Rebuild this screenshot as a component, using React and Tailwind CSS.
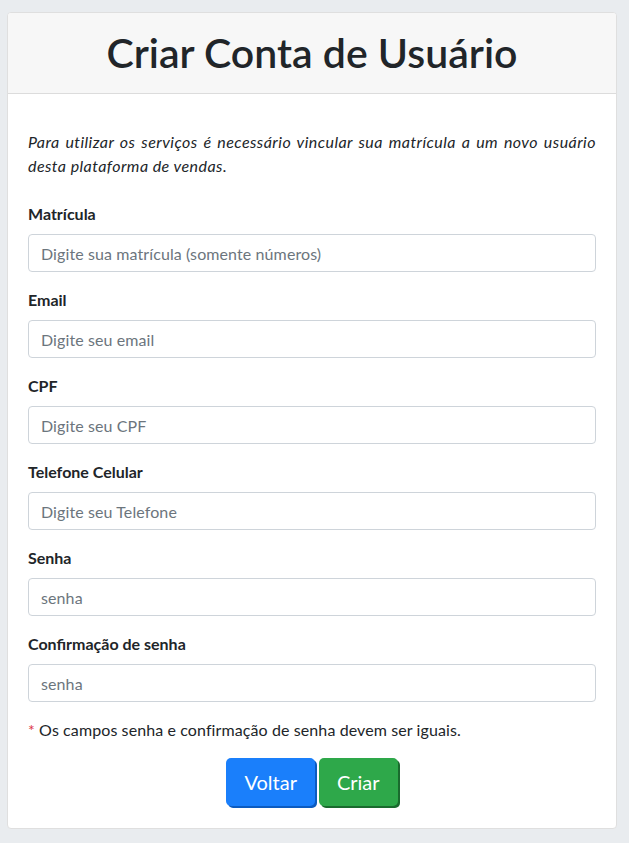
const fields = [
  { label: 'Matrícula', placeholder: 'Digite sua matrícula (somente números)', type: 'text' },
  { label: 'Email', placeholder: 'Digite seu email', type: 'email' },
  { label: 'CPF', placeholder: 'Digite seu CPF', type: 'text' },
  { label: 'Telefone Celular', placeholder: 'Digite seu Telefone', type: 'text' },
  { label: 'Senha', placeholder: 'senha', type: 'password' },
  { label: 'Confirmação de senha', placeholder: 'senha', type: 'password' },
]

const App = () => {
  return (
    <div className="min-h-screen bg-[#e9ecef] pt-3 px-[7px] pb-4 font-['Lato',sans-serif] text-[#212529]">
      <div className="w-[610px] bg-white border border-[#dfdfdf] rounded-[4px] overflow-hidden">
        <div className="h-[81px] bg-[#f7f7f7] border-b border-[#dcdcdc] flex items-center justify-center">
          <h1 className="text-[41px] font-semibold leading-tight">Criar Conta de Usuário</h1>
        </div>

        <div className="px-5 pt-5 pb-[22px]">
          <p className="mt-4 mb-6 italic text-base leading-6 text-justify tracking-[0.45px]">
            Para utilizar os serviços é necessário vincular sua matrícula a um novo usuário desta plataforma de vendas.
          </p>

          {fields.map((f) => (
            <div key={f.label} className="mb-4">
              <label className="block mb-2 font-bold text-base leading-6">{f.label}</label>
              <input
                type={f.type}
                placeholder={f.placeholder}
                className="block w-full h-[38px] px-3 border border-[#ced4da] rounded-[4px] text-base tracking-[0.1px] placeholder:text-[#6c757d] outline-none"
              />
            </div>
          ))}

          <p className="mb-4 text-base leading-6 tracking-[0.1px]">
            <span className="text-[#dc3545]">*</span> Os campos senha e confirmação de senha devem ser iguais.
          </p>

          <div className="flex justify-center gap-1">
            <button className="h-[48px] px-[18px] text-xl text-white bg-[#1a7ffb] rounded-[5px] shadow-[2px_2px_0_#0b5bc0]">
              Voltar
            </button>
            <button className="h-[48px] px-[18px] text-xl text-white bg-[#2ea84a] rounded-[5px] shadow-[2px_2px_0_#1a6b2e]">
              Criar
            </button>
          </div>
        </div>
      </div>
    </div>
  )
}

export default App
